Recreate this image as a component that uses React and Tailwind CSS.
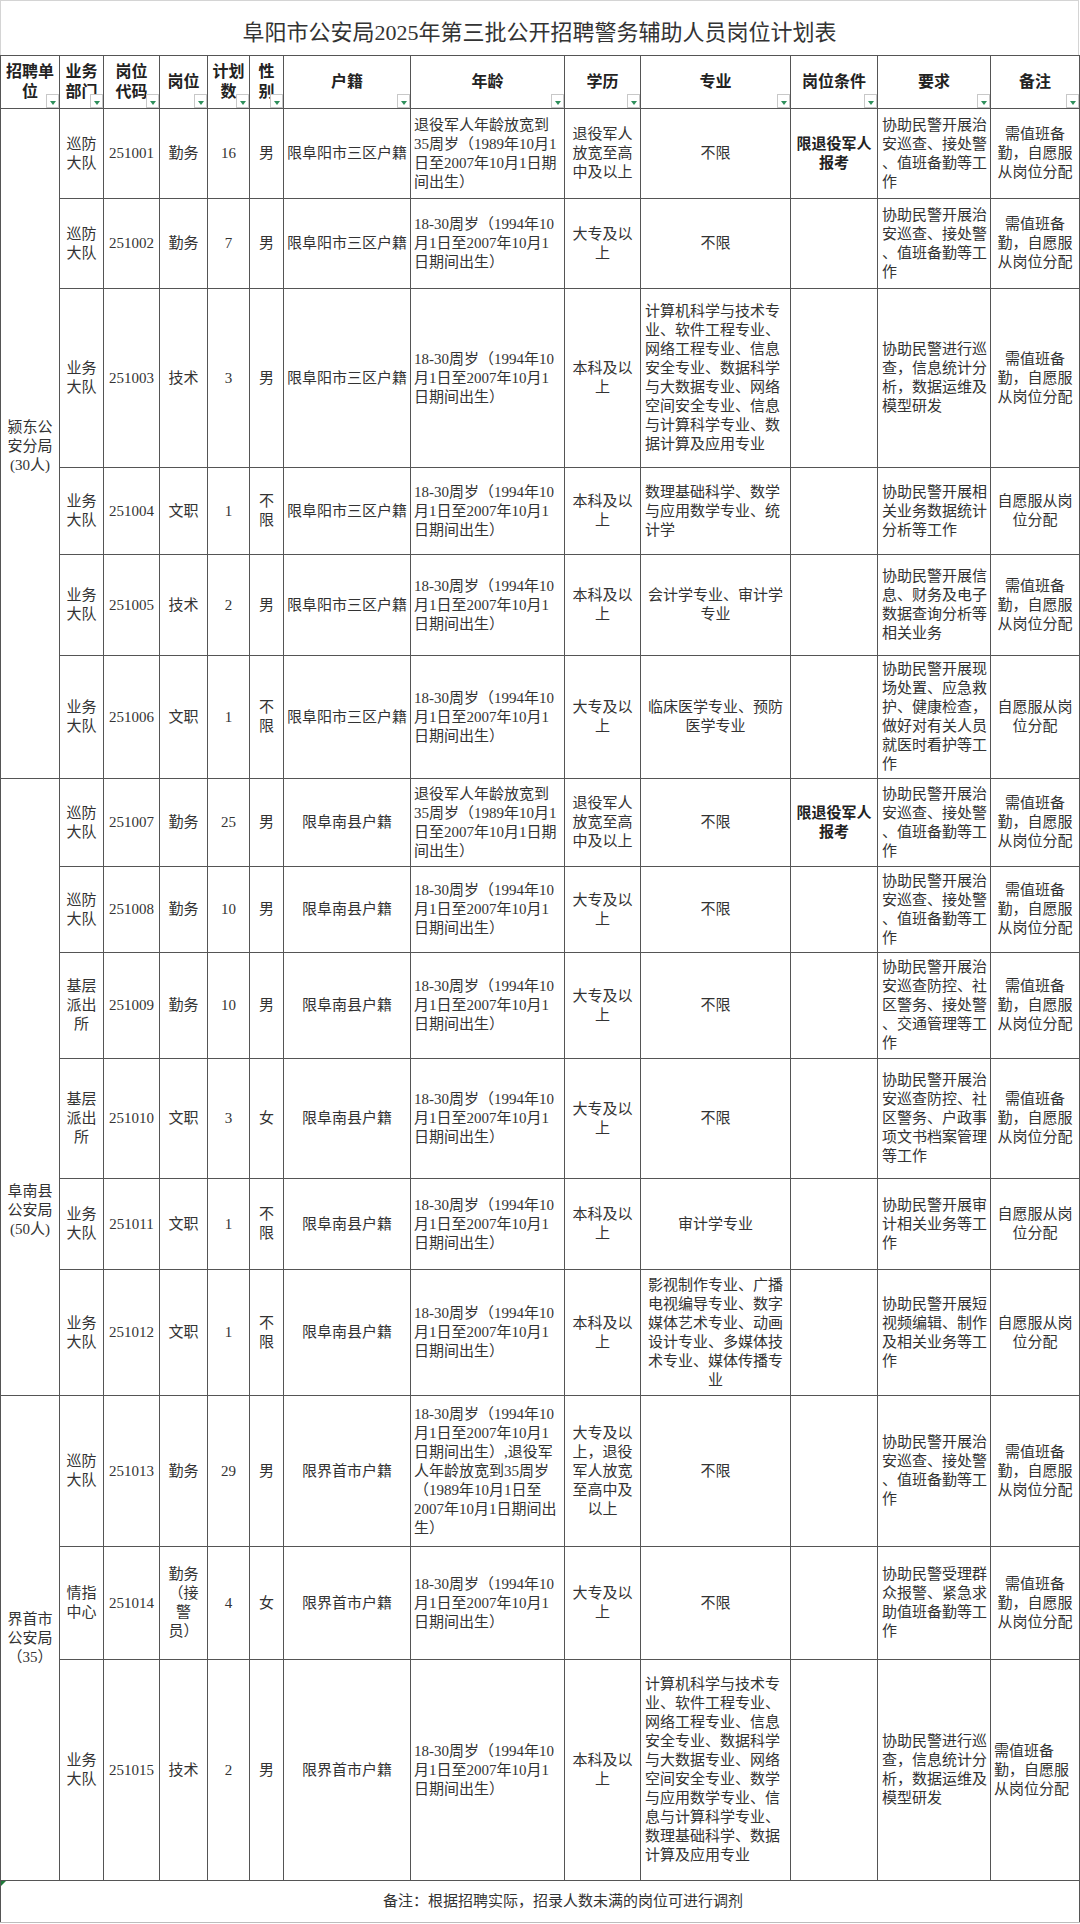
import React from "react";

// 招聘岗位计划表
const headers = [
  "招聘单\n位",
  "业务\n部门",
  "岗位\n代码",
  "岗位",
  "计划\n数",
  "性\n别",
  "户籍",
  "年龄",
  "学历",
  "专业",
  "岗位条件",
  "要求",
  "备注",
];

const AGE_VET = "退役军人年龄放宽到\n35周岁（1989年10月1\n日至2007年10月1日期\n间出生）";
const AGE = "18-30周岁（1994年10\n月1日至2007年10月1\n日期间出生）";
const EDU_VET = "退役军人\n放宽至高\n中及以上";
const DAZHUAN = "大专及以\n上";
const BENKE = "本科及以\n上";
const COND_VET = "限退役军人\n报考";
const REQ_PATROL = "协助民警开展治\n安巡查、接处警\n、值班备勤等工\n作";
const REQ_TECH = "协助民警进行巡\n查，信息统计分\n析，数据运维及\n模型研发";
const NOTE_DUTY = "需值班备\n勤，自愿服\n从岗位分配";
const NOTE_FREE = "自愿服从岗\n位分配";
const FY = "限阜阳市三区户籍";
const FN = "限阜南县户籍";
const JS = "限界首市户籍";

const groups = [
  {
    label: "颍东公\n安分局\n(30人)",
    pad: "pt-[309px]",
    rows: [
      { h: "h-[90px]", dept: "巡防\n大队", code: "251001", pos: "勤务", num: "16", sex: "男", hukou: FY, age: AGE_VET, edu: EDU_VET, major: "不限", cond: COND_VET, req: REQ_PATROL, note: NOTE_DUTY },
      { h: "h-[90px]", dept: "巡防\n大队", code: "251002", pos: "勤务", num: "7", sex: "男", hukou: FY, age: AGE, edu: DAZHUAN, major: "不限", req: REQ_PATROL, note: NOTE_DUTY },
      {
        h: "h-[179px]", dept: "业务\n大队", code: "251003", pos: "技术", num: "3", sex: "男", hukou: FY, age: AGE, edu: BENKE,
        major: "计算机科学与技术专\n业、软件工程专业、\n网络工程专业、信息\n安全专业、数据科学\n与大数据专业、网络\n空间安全专业、信息\n与计算科学专业、数\n据计算及应用专业",
        majorLeft: true, req: REQ_TECH, note: NOTE_DUTY,
      },
      {
        h: "h-[87px]", dept: "业务\n大队", code: "251004", pos: "文职", num: "1", sex: "不\n限", hukou: FY, age: AGE, edu: BENKE,
        major: "数理基础科学、数学\n与应用数学专业、统\n计学", majorLeft: true, req: "协助民警开展相\n关业务数据统计\n分析等工作", note: NOTE_FREE,
      },
      {
        h: "h-[101px]", dept: "业务\n大队", code: "251005", pos: "技术", num: "2", sex: "男", hukou: FY, age: AGE, edu: BENKE,
        major: "会计学专业、审计学\n专业", req: "协助民警开展信\n息、财务及电子\n数据查询分析等\n相关业务", note: NOTE_DUTY,
      },
      {
        h: "h-[123px]", dept: "业务\n大队", code: "251006", pos: "文职", num: "1", sex: "不\n限", hukou: FY, age: AGE, edu: DAZHUAN,
        major: "临床医学专业、预防\n医学专业", req: "协助民警开展现\n场处置、应急救\n护、健康检查，\n做好对有关人员\n就医时看护等工\n作", note: NOTE_FREE,
      },
    ],
  },
  {
    label: "阜南县\n公安局\n(50人)",
    pad: "pt-[403px]",
    rows: [
      { h: "h-[88px]", dept: "巡防\n大队", code: "251007", pos: "勤务", num: "25", sex: "男", hukou: FN, age: AGE_VET, edu: EDU_VET, major: "不限", cond: COND_VET, req: REQ_PATROL, note: NOTE_DUTY },
      { h: "h-[86px]", dept: "巡防\n大队", code: "251008", pos: "勤务", num: "10", sex: "男", hukou: FN, age: AGE, edu: DAZHUAN, major: "不限", req: REQ_PATROL, note: NOTE_DUTY },
      {
        h: "h-[106px]", dept: "基层\n派出\n所", code: "251009", pos: "勤务", num: "10", sex: "男", hukou: FN, age: AGE, edu: DAZHUAN,
        major: "不限", req: "协助民警开展治\n安巡查防控、社\n区警务、接处警\n、交通管理等工\n作", note: NOTE_DUTY,
      },
      {
        h: "h-[120px]", dept: "基层\n派出\n所", code: "251010", pos: "文职", num: "3", sex: "女", hukou: FN, age: AGE, edu: DAZHUAN,
        major: "不限", req: "协助民警开展治\n安巡查防控、社\n区警务、户政事\n项文书档案管理\n等工作", note: NOTE_DUTY,
      },
      {
        h: "h-[91px]", dept: "业务\n大队", code: "251011", pos: "文职", num: "1", sex: "不\n限", hukou: FN, age: AGE, edu: BENKE,
        major: "审计学专业", req: "协助民警开展审\n计相关业务等工\n作", note: NOTE_FREE,
      },
      {
        h: "h-[126px]", dept: "业务\n大队", code: "251012", pos: "文职", num: "1", sex: "不\n限", hukou: FN, age: AGE, edu: BENKE,
        major: "影视制作专业、广播\n电视编导专业、数字\n媒体艺术专业、动画\n设计专业、多媒体技\n术专业、媒体传播专\n业",
        req: "协助民警开展短\n视频编辑、制作\n及相关业务等工\n作", note: NOTE_FREE,
      },
    ],
  },
  {
    label: "界首市\n公安局\n（35）",
    pad: "pt-[214px]",
    rows: [
      {
        h: "h-[151px]", dept: "巡防\n大队", code: "251013", pos: "勤务", num: "29", sex: "男", hukou: JS,
        age: "18-30周岁（1994年10\n月1日至2007年10月1\n日期间出生）,退役军\n人年龄放宽到35周岁\n（1989年10月1日至\n2007年10月1日期间出\n生）",
        edu: "大专及以\n上，退役\n军人放宽\n至高中及\n以上", major: "不限", req: REQ_PATROL, note: NOTE_DUTY,
      },
      {
        h: "h-[113px]", dept: "情指\n中心", code: "251014", pos: "勤务\n（接\n警\n员）", num: "4", sex: "女", hukou: JS, age: AGE, edu: DAZHUAN,
        major: "不限", req: "协助民警受理群\n众报警、紧急求\n助值班备勤等工\n作", note: NOTE_DUTY,
      },
      {
        h: "h-[221px]", dept: "业务\n大队", code: "251015", pos: "技术", num: "2", sex: "男", hukou: JS, age: AGE, edu: BENKE,
        major: "计算机科学与技术专\n业、软件工程专业、\n网络工程专业、信息\n安全专业、数据科学\n与大数据专业、网络\n空间安全专业、数学\n与应用数学专业、信\n息与计算科学专业、\n数理基础科学、数据\n计算及应用专业",
        majorLeft: true, req: REQ_TECH, note: NOTE_DUTY, noteLeft: true,
      },
    ],
  },
];

const FilterBtn = () => (
  <span className="absolute bottom-0 right-0 flex h-[14px] w-[13px] items-center justify-center border border-[#c8c8c8] bg-white">
    <span className="mt-[3px] h-0 w-0 border-x-[3px] border-t-[4px] border-x-transparent border-t-[#2f8f5b]" />
  </span>
);

const Td = ({ children, className = "" }) => (
  <td className={`border border-[#555] px-[3px] py-0 align-middle whitespace-pre-line ${className}`}>
    {children}
  </td>
);

const App = () => {
  return (
    <div className="min-h-[1924px] w-[1080px] bg-white font-['Liberation_Serif','Noto_Sans_CJK_SC',serif] text-[#333]">
      <div className="flex h-[55px] w-[1079px] items-center justify-center border-x border-t border-[#d4d4d4] pt-[9px] text-[22px] leading-[26px]">
        阜阳市公安局2025年第三批公开招聘警务辅助人员岗位计划表
      </div>

      <table className="w-[1079px] table-fixed border-collapse text-[15px] leading-[19px]">
        <colgroup>
          <col className="w-[59px]" />
          <col className="w-[44px]" />
          <col className="w-[56px]" />
          <col className="w-[48px]" />
          <col className="w-[42px]" />
          <col className="w-[34px]" />
          <col className="w-[127px]" />
          <col className="w-[154px]" />
          <col className="w-[76px]" />
          <col className="w-[150px]" />
          <col className="w-[87px]" />
          <col className="w-[113px]" />
          <col className="w-[89px]" />
        </colgroup>
        <thead>
          <tr className="h-[53px]">
            {headers.map((h) => (
              <th
                key={h}
                className="relative border border-[#555] px-[2px] py-0 align-middle text-[16px] leading-[20px] font-bold whitespace-pre-line text-[#222]"
              >
                {h}
                <FilterBtn />
              </th>
            ))}
          </tr>
        </thead>
        <tbody>
          {groups.map((g) =>
            g.rows.map((r, i) => (
              <tr key={r.code} className={r.h}>
                {i === 0 && (
                  <td
                    rowSpan={g.rows.length}
                    className={`border border-[#555] px-[3px] pb-0 text-center align-top whitespace-pre-line ${g.pad}`}
                  >
                    {g.label}
                  </td>
                )}
                <Td className="text-center">{r.dept}</Td>
                <Td className="text-center">{r.code}</Td>
                <Td className="text-center">{r.pos}</Td>
                <Td className="text-center">{r.num}</Td>
                <Td className="text-center">{r.sex}</Td>
                <Td className="text-center">{r.hukou}</Td>
                <Td className="text-left">{r.age}</Td>
                <Td className="text-center">{r.edu}</Td>
                <Td className={r.majorLeft ? "pl-[4px] text-left" : "text-center"}>{r.major}</Td>
                <Td className="text-center font-bold text-[#222]">{r.cond || ""}</Td>
                <Td className="pl-[4px] text-left">{r.req}</Td>
                <Td className={r.noteLeft ? "text-left" : "text-center"}>{r.note}</Td>
              </tr>
            ))
          )}
          <tr className="h-[42px]">
            <td colSpan={13} className="relative border border-[#555] border-b-[#bdbdbd] py-0 pl-[46px] text-center align-middle">
              <span className="absolute left-0 top-0 h-0 w-0 border-r-[5px] border-t-[5px] border-r-transparent border-t-[#1f7a3a]" />
              备注：根据招聘实际，招录人数未满的岗位可进行调剂
            </td>
          </tr>
        </tbody>
      </table>
    </div>
  );
};

export default App;
